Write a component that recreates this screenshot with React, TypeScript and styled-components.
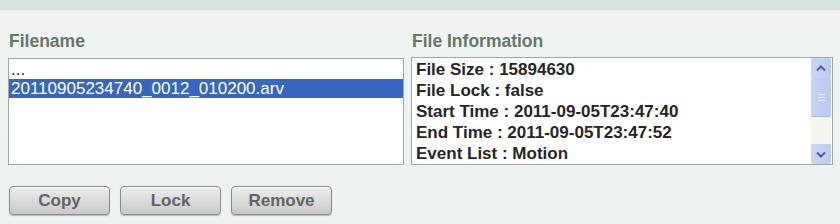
import styled, { createGlobalStyle } from "styled-components";

const GlobalStyle = createGlobalStyle`
  html, body {
    margin: 0;
    padding: 0;
    background: #eff3f2;
  }
  body {
    font-family: "Liberation Sans", Arial, sans-serif;
  }
`;

const fileInfo = [
  "File Size : 15894630",
  "File Lock : false",
  "Start Time : 2011-09-05T23:47:40",
  "End Time : 2011-09-05T23:47:52",
  "Event List : Motion",
];

const App = () => {
  return (
    <>
      <GlobalStyle />
      <Page>
        <TopBar />
        <Panels>
          <Column>
            <Label>Filename</Label>
            <ListBox>
              <ListRow>...</ListRow>
              <ListRow selected>20110905234740_0012_010200.arv</ListRow>
            </ListBox>
          </Column>
          <Column>
            <Label>File Information</Label>
            <InfoBox>
              <InfoText>
                {fileInfo.map((line) => (
                  <InfoLine key={line}>{line}</InfoLine>
                ))}
              </InfoText>
              <ScrollBar>
                <ScrollButton>
                  <svg width="10" height="7" viewBox="0 0 10 7">
                    <path d="M1 5.5 L5 1.5 L9 5.5" fill="none" stroke="#4b5f94" strokeWidth="2" />
                  </svg>
                </ScrollButton>
                <Thumb>
                  <Grip />
                  <Grip />
                  <Grip />
                </Thumb>
                <Track />
                <ScrollButton>
                  <svg width="10" height="7" viewBox="0 0 10 7">
                    <path d="M1 1.5 L5 5.5 L9 1.5" fill="none" stroke="#4b5f94" strokeWidth="2" />
                  </svg>
                </ScrollButton>
              </ScrollBar>
            </InfoBox>
          </Column>
        </Panels>
        <ButtonRow>
          <Button>Copy</Button>
          <Button>Lock</Button>
          <Button>Remove</Button>
        </ButtonRow>
      </Page>
    </>
  );
};

export default App;

const Page = styled.div`
  width: 840px;
  height: 224px;
  overflow: hidden;
  background: linear-gradient(180deg, #f3f6f5 0px, #eff3f2 40px, #eef2f1 100%);
`;

const TopBar = styled.div`
  height: 10px;
  background: #d7e3e1;
  box-shadow: 0 1px 2px #e4ecea;
`;

const Panels = styled.div`
  display: grid;
  grid-template-columns: 396px 422px;
  column-gap: 7px;
  padding: 21px 0 0 8px;
`;

const Column = styled.div`
  display: flex;
  flex-direction: column;
`;

const Label = styled.div`
  font-size: 17.5px;
  font-weight: bold;
  color: #687868;
  line-height: 20px;
  height: 27px;
  padding-left: 1px;
`;

const ListBox = styled.div`
  height: 107px;
  box-sizing: border-box;
  background: #ffffff;
  border: 1px solid #a3a7aa;
  padding-top: 1px;
`;

const ListRow = styled.div<{ selected?: boolean }>`
  font-size: 17px;
  line-height: 19px;
  height: 19px;
  padding-left: 2px;
  white-space: nowrap;
  color: ${(p) => (p.selected ? "#ffffff" : "#222222")};
  background: ${(p) => (p.selected ? "#3767c0" : "transparent")};
`;

const InfoBox = styled.div`
  height: 108px;
  box-sizing: border-box;
  background: #ffffff;
  border: 1px solid #a3a7aa;
  display: flex;
  margin-top: -1px;
`;

const InfoText = styled.div`
  flex: 1;
  padding: 1px 0 0 4px;
  overflow: hidden;
`;

const InfoLine = styled.div`
  font-size: 17px;
  font-weight: bold;
  color: #262626;
  line-height: 21px;
  white-space: nowrap;
`;

const ScrollBar = styled.div`
  width: 20px;
  display: flex;
  flex-direction: column;
  background: #f7f7ef;
  margin-right: 1px;
`;

const ScrollButton = styled.div`
  height: 20px;
  display: flex;
  align-items: center;
  justify-content: center;
  background: linear-gradient(90deg, #cbd7f7, #bccbf3);
  border-radius: 2px;
`;

const Thumb = styled.div`
  height: 38px;
  background: linear-gradient(90deg, #c6d3f6, #b9c8f2);
  border-radius: 2px;
  display: flex;
  flex-direction: column;
  align-items: center;
  justify-content: center;
  gap: 2px;
  border-bottom: 1px solid #a9b8e6;
`;

const Grip = styled.div`
  width: 7px;
  height: 1px;
  background: #e6ecfc;
`;

const Track = styled.div`
  flex: 1;
  background: #f6f6ec;
`;

const ButtonRow = styled.div`
  display: flex;
  gap: 10px;
  padding: 21px 0 0 9px;
`;

const Button = styled.button`
  width: 101px;
  height: 29px;
  box-sizing: border-box;
  border: 1px solid #8a8d8f;
  border-radius: 4px;
  background: linear-gradient(180deg, #eeeeee 0%, #dcdcdc 45%, #c9c9c9 100%);
  box-shadow: inset 0 1px 0 #fafafa, 0 1px 1px #b5b8b8;
  font-family: "Liberation Sans", Arial, sans-serif;
  font-size: 17px;
  font-weight: bold;
  color: #646464;
  padding: 0;
  line-height: 27px;
`;
